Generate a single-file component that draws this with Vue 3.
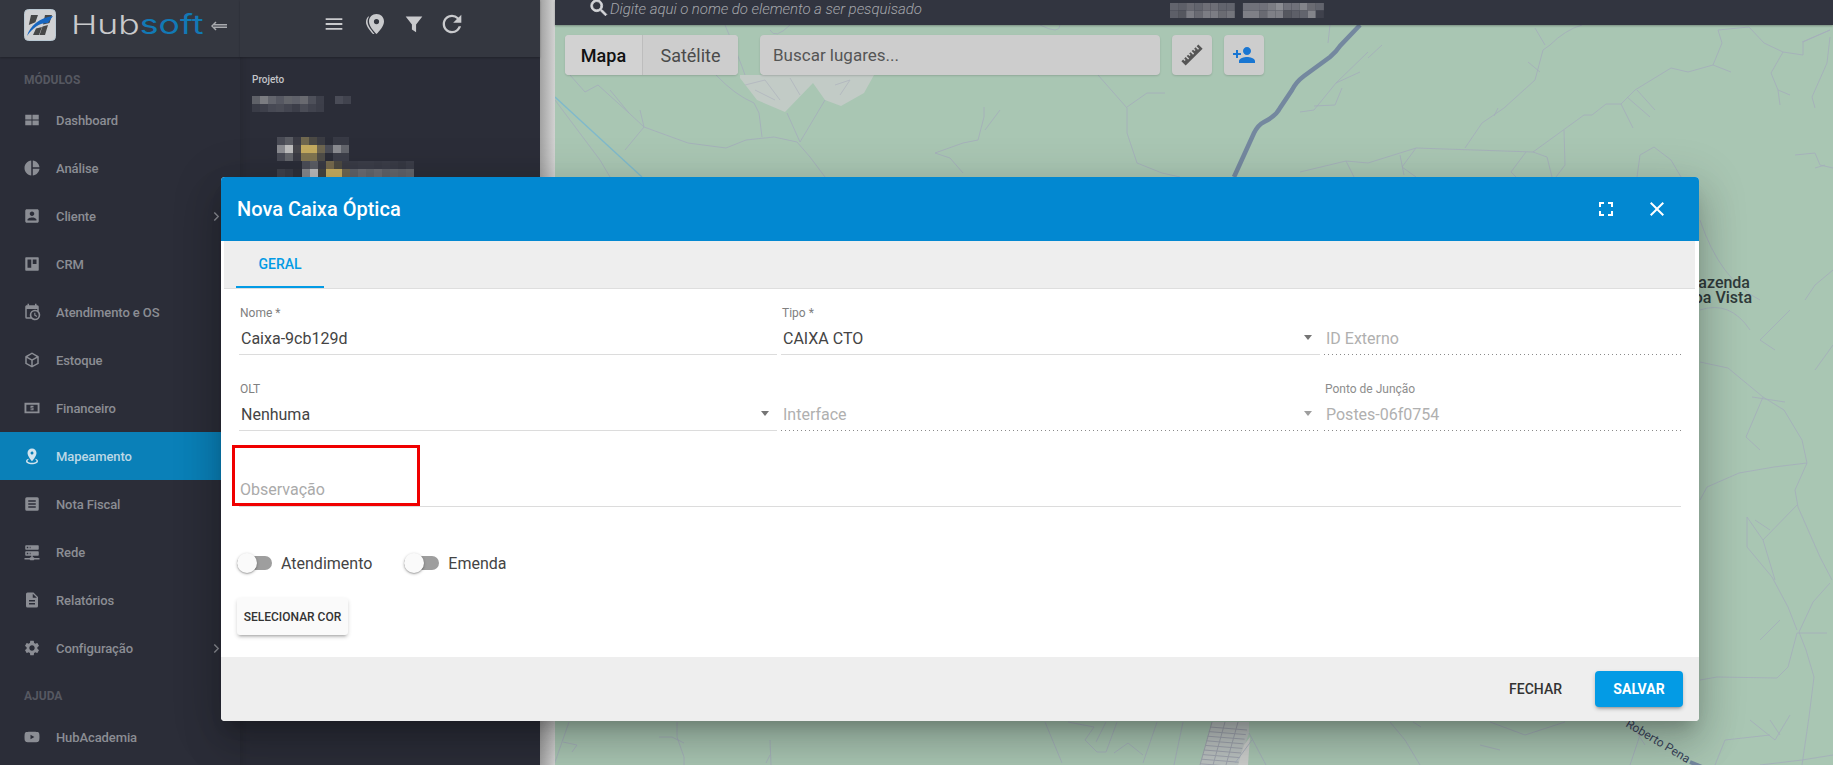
<script setup>
const nav = [
  { t: 'Dashboard', d: 'M3 5h8.4v6.4H3zm9.6 0H21v6.4h-8.4zM3 12.6h8.4V19H3zm9.6 0H21V19h-8.4z' },
  { t: 'Análise', d: 'M11 2v20c-5.07-.5-9-4.79-9-10s3.93-9.5 9-10zm2.03 0v8.99H22c-.47-4.74-4.24-8.52-8.97-8.99zm0 11.01V22c4.74-.47 8.5-4.25 8.97-8.99h-8.97z' },
  { t: 'Cliente', arrow: true, d: 'M3 5v14c0 1.1.89 2 2 2h14c1.1 0 2-.9 2-2V5c0-1.1-.9-2-2-2H5c-1.11 0-2 .9-2 2zm12 4c0 1.66-1.34 3-3 3s-3-1.34-3-3 1.34-3 3-3 3 1.34 3 3zm-9 8c0-2 4-3.1 6-3.1s6 1.1 6 3.1v1H6v-1z' },
  { t: 'CRM', d: 'M4 3h16a1 1 0 011 1v16a1 1 0 01-1 1H4a1 1 0 01-1-1V4a1 1 0 011-1zm2 3v11h5V6zm7 0v6h5V6z' },
  { t: 'Atendimento e OS', d: 'M15 13h1.5v2.82l2.44 1.41-.75 1.3L15 16.69V13m4-5H5v11h4.67c-.43-.91-.67-1.93-.67-3a7 7 0 0 1 7-7c1.07 0 2.09.24 3 .67V8M5 21a2 2 0 0 1-2-2V5c0-1.11.89-2 2-2h1V1h2v2h8V1h2v2h1a2 2 0 0 1 2 2v6.1c1.24 1.26 2 2.99 2 4.9a7 7 0 0 1-7 7c-1.91 0-3.64-.76-4.9-2H5m11-9.85A4.85 4.85 0 0 0 11.15 16c0 2.68 2.17 4.85 4.85 4.85A4.85 4.85 0 0 0 20.85 16c0-2.68-2.17-4.85-4.85-4.85z' },
  { t: 'Estoque', d: 'M21 16.5c0 .38-.21.71-.53.88l-7.9 4.44c-.16.12-.36.18-.57.18-.21 0-.41-.06-.57-.18l-7.9-4.44A.991.991 0 0 1 3 16.5v-9c0-.38.21-.71.53-.88l7.9-4.44c.16-.12.36-.18.57-.18.21 0 .41.06.57.18l7.9 4.44c.32.17.53.5.53.88v9M12 4.15 6.04 7.5 12 10.85l5.96-3.35L12 4.15M5 15.91l6 3.38v-6.71L5 9.21v6.7m14 0v-6.7l-6 3.37v6.71l6-3.38z' },
  { t: 'Financeiro', d: 'M2 5h20v14H2zM4.5 7.5v9h15v-9zM10 9h4v1.5h-2.7v.8H14V15h-4v-1.5h2.7v-.8H10z' },
  { t: 'Mapeamento', active: true, d: 'M12 2C15.31 2 18 4.66 18 7.95C18 12.41 12 19 12 19S6 12.41 6 7.95C6 4.66 8.69 2 12 2M12 6A2 2 0 0 0 10 8C10 9.11 10.9 10 12 10A2 2 0 0 0 14 8C14 6.9 13.11 6 12 6M20 19C20 21.21 16.42 23 12 23S4 21.21 4 19C4 17.71 5.22 16.56 7.11 15.83L7.75 16.74C6.67 17.19 6 17.81 6 18.5C6 19.88 8.69 21 12 21S18 19.88 18 18.5C18 17.81 17.33 17.19 16.25 16.74L16.89 15.83C18.78 16.56 20 17.71 20 19Z' },
  { t: 'Nota Fiscal', d: 'M5 3h14a2 2 0 012 2v14a2 2 0 01-2 2H5a2 2 0 01-2-2V5a2 2 0 012-2zm2 4v2h10V7zm0 4v2h10v-2zm0 4v2h10v-2z' },
  { t: 'Rede', d: 'M13 19h1a1 1 0 0 1 1 1h7v2h-7a1 1 0 0 1-1 1h-4a1 1 0 0 1-1-1H2v-2h7a1 1 0 0 1 1-1h1v-2H4a1 1 0 0 1-1-1v-4a1 1 0 0 1 1-1h16a1 1 0 0 1 1 1v4a1 1 0 0 1-1 1h-7v2M4 3h16a1 1 0 0 1 1 1v4a1 1 0 0 1-1 1H4a1 1 0 0 1-1-1V4a1 1 0 0 1 1-1m5 4h1V5H9v2m0 8h1v-2H9v2M5 5v2h2V5H5m0 8v2h2v-2H5z' },
  { t: 'Relatórios', d: 'M14 2H6a2 2 0 0 0-2 2v16a2 2 0 0 0 2 2h12a2 2 0 0 0 2-2V8l-6-6m2 16H8v-2h8v2m0-4H8v-2h8v2m-3-5V3.5L18.5 9H13z' },
  { t: 'Configuração', arrow: true, d: 'M19.14 12.94c.04-.3.06-.61.06-.94 0-.32-.02-.64-.07-.94l2.03-1.58a.49.49 0 0 0 .12-.61l-1.92-3.32a.488.488 0 0 0-.59-.22l-2.39.96c-.5-.38-1.03-.7-1.62-.94l-.36-2.54a.484.484 0 0 0-.48-.41h-3.84c-.24 0-.43.17-.47.41l-.36 2.54c-.59.24-1.13.57-1.62.94l-2.39-.96c-.22-.08-.47 0-.59.22L2.74 8.87c-.12.21-.08.47.12.61l2.03 1.58c-.05.3-.09.63-.09.94s.02.64.07.94l-2.03 1.58a.49.49 0 0 0-.12.61l1.92 3.32c.12.22.37.29.59.22l2.39-.96c.5.38 1.03.7 1.62.94l.36 2.54c.05.24.24.41.48.41h3.84c.24 0 .44-.17.47-.41l.36-2.54c.59-.24 1.13-.56 1.62-.94l2.39.96c.22.08.47 0 .59-.22l1.92-3.32c.12-.22.07-.47-.12-.61l-2.01-1.58zM12 15.6c-1.98 0-3.6-1.62-3.6-3.6s1.62-3.6 3.6-3.6 3.6 1.62 3.6 3.6-1.62 3.6-3.6 3.6z' }
]
const help = { t: 'HubAcademia', d: 'M21.58 7.19c-.23-.86-.91-1.54-1.77-1.77C18.25 5 12 5 12 5s-6.25 0-7.81.42c-.86.23-1.54.91-1.77 1.77C2 8.75 2 12 2 12s0 3.25.42 4.81c.23.86.91 1.54 1.77 1.77C5.75 19 12 19 12 19s6.25 0 7.81-.42c.86-.23 1.54-.91 1.77-1.77C22 15.25 22 12 22 12s0-3.25-.42-4.81zM10 15V9l5.2 3-5.2 3z' }

const cell = (x, y, c, w = 8, h = 8) => ({ x, y, c, w, h })
const rowOf = (x0, y, cs, w = 8, h = 8) => cs.map((c, i) => c ? cell(x0 + i * w, y, c, w, h) : null).filter(Boolean)
const projectCells = [
  ...rowOf(252, 96, ['#5f6168', '#7b7c81', '#63656d', '#565862', '#63656b', '#5f616a', '#696a70', '#4e505a', '#3d3f4a']),
  ...rowOf(335, 96, ['#4a4c57', '#41434e']),
  ...rowOf(252, 104, ['#3a3c47', '#3e404b', '#474954', '#4a4c56', '#434550', '#3c3e49', '#4a4c56', '#41434e', '#3c3e49']),
  ...rowOf(277, 137, ['#494b55', '#5a5c63', '#3a3b44', '#70684f', '#4c4a45', '#3b3c43', null, '#383a45', '#383a45']),
  ...rowOf(277, 145, ['#8a8b90', '#bdbdbd', '#45454a', '#c4ab5f', '#c4ab5f', '#6e6650', '#4b4d57', '#8a8b90', '#63656c']),
  ...rowOf(277, 153, ['#484a54', '#63656b', '#3a3b44', '#7f7450', '#7f7450', '#4f4d48', null, '#3c3e49', '#3c3e49']),
  ...rowOf(302, 161, ['#4b4d57', '#5a5c63', '#3a3b44', '#75694d', '#4d4a42', '#3a3b44', '#393b46', '#3b3d48', '#3b3d48', '#393b46', '#3b3d48', '#393b46', '#363843', '#3b3d48']),
  ...rowOf(277, 169, ['#3e404a', '#383a44', '#2f3039']),
  ...rowOf(302, 169, ['#85868b', '#b9b9b9', '#45443f', '#c4ab5f', '#c4ab5f', '#6e6650', '#5f6168', '#6a6b71', '#63656b', '#6a6b71', '#5f6168', '#63656b', '#5f6168', '#63656b'])
]
const topCells = [
  ...rowOf(0, 0, ['#62646d', '#5d5f68', '#696a72', '#62646d', '#6e6f77', '#6e6f77', '#62646d', '#62646d', null, '#70717a', '#70717a', '#70717a', '#7b7c83', '#8b8c92', '#70717a', '#70717a', '#83848a', '#6a6b72', '#62646d'], 8.1, 7.5),
  ...rowOf(0, 7.5, ['#5d5f68', '#55575f', '#7c7d84', '#696a72', '#7c7d84', '#7c7d84', '#6a6b72', '#74757c', null, '#7f8087', '#7f8087', '#696a72', '#7f8087', '#7f8087', '#55575f', '#5d5f68', '#62646d', '#83848a', '#3f414c'], 8.1, 7.5)
]

const roads = [
  'M598 85L629 113L644 127L688 143L726 148L746 140L774 137L797 142L810 157L825 177',
  'M716 75Q735 95 754 103L759 113L762 137', 'M825 100L800 142L787 113',
  'M644 127L640 110M644 127L625 150M629 113L610 90M555 100L600 160L610 177',
  'M1098 75L1127 108L1127 133L1137 163L1162 173L1180 177M1127 107L1147 93L1165 93',
  'M984 107V117L978 140L963 143L935 153L950 158L963 173M1000 110L985 130',
  'M1330 25L1328 43M725 25Q740 60 745 75M790 25Q775 40 770 30M1040 25Q1060 35 1060 25M570 75L585 92L598 85',
  'M1582 25Q1565 30 1550 45L1543 50L1535 80L1504 108L1482 123L1465 148M1545 45L1535 28M1540 72L1528 62M1498 108L1494 116',
  'M1533 152L1584 115L1592 115L1606 104L1621 104L1635 90L1671 68L1688 72L1713 65L1722 43L1718 30L1749 27L1764 43L1783 52L1803 55L1803 42L1830 30',
  'M1300 172L1346 161L1368 163L1416 148L1533 152L1547 157L1552 177M1526 152L1511 172L1516 177M1416 148L1402 167L1416 177M1346 161L1354 177M1400 155L1404 175',
  'M1654 147L1640 155L1637 177M1654 147L1671 160L1681 177M1564 130L1565 165L1556 177M1713 65L1731 72',
  'M1783 52L1771 73L1778 90L1780 105M1778 90L1790 95M1621 104L1633 128M1627 97L1650 117M1637 90L1655 110',
  'M1830 37L1827 63L1812 97L1815 108M1802 42L1830 30',
  'M1368 52L1336 83L1314 110L1300 112M1382 45L1368 58M1360 72L1336 83M1342 88L1335 105L1314 106',
  'M1795 155L1815 153L1820 165L1833 168M1815 168L1825 165M1700 362L1728 368L1763 397L1784 410L1802 440L1807 463L1795 490L1798 507L1820 557L1832 580',
  'M1700 500L1707 487L1739 473L1774 467L1807 463M1763 397L1746 437L1760 450M1752 397L1785 402',
  'M1797 505L1763 540L1747 517V547L1772 577L1788 607L1797 630M1763 540L1775 580',
  'M1830 583L1813 602L1799 632L1806 650L1814 677L1809 717L1802 765',
  'M1700 680L1717 677L1777 678L1788 667L1797 633L1827 633M1780 620L1760 640M1755 520L1770 530',
  'M1700 310Q1730 300 1750 330M1790 310L1760 340L1775 350M1833 345L1815 370M1700 220Q1720 280 1760 300M1805 300L1815 285L1833 270',
  'M1715 765L1725 740L1770 735M1760 765L1802 760L1833 755M1750 720L1775 740L1790 715M1770 720L1780 735',
  'M569 722L554 765M563 742L577 745L572 752M677 722V737L684 757V765M659 737L672 737L684 743',
  'M770 740L771 765M766 763L770 755M1045 722L1062 763M1117 722L1106 752L1097 752L1085 740L1094 727L1068 722M1106 722L1096 742M1114 753L1128 743L1143 755',
  'M1157 722L1143 763M1183 722L1174 765M1249 733L1266 765M1252 740L1235 763M1413 722L1421 727',
  'M1625 722L1640 735L1630 765M1490 722L1525 735L1565 722M1630 722L1645 745',
  'M1390 722L1405 740L1420 765M1480 745L1500 750'
]
const blockLines = Array.from({ length: 9 }, (_, i) => {
  const y = 727 + i * 4.6
  return `M${1210 - i * 1.2} ${y}L${1247 - i * 1.2} ${y + 3}`
})
</script>

<template>
  <div class="app">
    <aside class="sidebar">
      <header class="brand">
        <svg class="logo" viewBox="0 0 32 32" aria-hidden="true">
          <rect x=".5" y=".5" width="31" height="31" rx="4" fill="#d0d1d3" stroke="#b9c8d3" />
          <path d="M7 6h7l-2.6 7.2L4.8 16zM21 6h7l-2.5 8-6.5 1.5zM12 19.5l6-1.5-3 8H9zM24 16l-3 10h-5.5l3-8.500z" fill="#474747" />
          <path d="M3 27C6 17 15 9 29 7c-2 3-4 5-5 7-7-.5-15 4-21 13z" fill="#1766c0" />
        </svg>
        <span class="wordmark"><span class="hub">Hub</span><span class="soft">soft</span></span>
        <svg class="collapse" viewBox="0 0 16 10" aria-hidden="true">
          <path d="M5 1L1 5l4 4M3 3.7h13M3 6.3h13" fill="none" stroke="#a9abaf" stroke-width="1.5" />
        </svg>
      </header>
      <div class="section first">MÓDULOS</div>
      <a v-for="item in nav" :key="item.t" class="nav-item" :class="{ active: item.active }">
        <svg class="nav-icon" viewBox="0 0 24 24" aria-hidden="true"><path :d="item.d" fill-rule="evenodd" /></svg>
        <span>{{ item.t }}</span>
        <svg v-if="item.arrow" class="chevron" viewBox="0 0 8 12" aria-hidden="true"><path d="M1.5 1.5L6 6l-4.5 4.5" fill="none" stroke="currentColor" stroke-width="1.6" /></svg>
      </a>
      <div class="section">AJUDA</div>
      <a class="nav-item">
        <svg class="nav-icon" viewBox="0 0 24 24" aria-hidden="true"><path :d="help.d" fill-rule="evenodd" /></svg>
        <span>{{ help.t }}</span>
      </a>
    </aside>

    <section class="panel">
      <header class="panel-tools">
        <svg class="tool menu" viewBox="0 0 24 24" aria-hidden="true"><path d="M2 5h20v2.3H2zM2 10.9h20v2.3H2zM2 16.7h20V19H2z" /></svg>
        <svg class="tool pin" viewBox="0 0 24 24" aria-hidden="true"><path fill-rule="evenodd" d="M13.5 2c4.3 0 7.5 3.2 7.5 7.4 0 4.7-4.7 9.7-7.5 12.6-2.8-2.9-7.5-7.9-7.5-12.6C6 5.2 9.2 2 13.5 2zm0 5a2.6 2.6 0 100 5.2 2.6 2.6 0 000-5.2z" /><path d="M5.2 4.5C3.8 6 3 7.8 3 9.9c0 3.7 3 7.700 7 12.100h1.5C7.7 17.3 4.6 13.4 4.6 9.5c0-1.8.5-3.5 1.5-4.7z" /></svg>
        <svg class="tool funnel" viewBox="0 0 24 24" aria-hidden="true"><path d="M2 3h20l-7.5 9.5V22l-5-3.5v-6z" /></svg>
        <svg class="tool reload" viewBox="0 0 24 24" aria-hidden="true"><path d="M17.65 6.35A7.958 7.958 0 0 0 12 4c-4.42 0-7.99 3.58-7.99 8s3.57 8 7.99 8c3.73 0 6.84-2.55 7.73-6h-2.08A5.99 5.99 0 0 1 12 18c-3.31 0-6-2.69-6-6s2.69-6 6-6c1.66 0 3.14.69 4.22 1.78L13 11h7V4l-2.35 2.35z" /></svg>
      </header>
      <div class="panel-body">
        <div class="project-label">Projeto</div>
        <svg class="mosaic" viewBox="252 96 170 81" aria-hidden="true">
          <rect v-for="(c, i) in projectCells" :key="i" :x="c.x" :y="c.y" :width="c.w" :height="c.h" :fill="c.c" />
        </svg>
      </div>
    </section>

    <div class="stripe"></div>

    <main class="map-area">
      <svg class="map" viewBox="555 0 1278 765" preserveAspectRatio="none" aria-hidden="true">
        <polygon points="740,78 757,100 785,112 813,83 825,100 841,106 864,93 874,75 740,75" fill="#c2cbc6" />
        <path d="M745 85L765 80L780 100M790 78L800 95M835 85L850 80L840 95M755 90L775 100" fill="none" stroke="#b4bac0" />
        <polygon points="1212,722 1249,722 1249,733 1238,765 1200,765" fill="#bcc3c2" />
        <polygon points="1244,745 1250,737 1248,765 1238,765" fill="#cdcfcd" />
        <path v-for="(d, i) in blockLines" :key="'b' + i" :d="d" fill="none" stroke="#9fa4ae" stroke-width="1" />
        <path d="M1212 722L1200 765M1225 722L1213 765M1238 722L1226 765" fill="none" stroke="#9fa4ae" />
        <path v-for="(d, i) in roads" :key="i" :d="d" fill="none" stroke="#a5aebb" stroke-width="1" stroke-opacity=".85" />
        <path d="M555 97L642 177" fill="none" stroke="#7fb9cc" stroke-width="1.3" />
        <path d="M1234 177L1254 133Q1258 125 1264 122Q1276 116 1280 108L1292 90Q1296 82 1304 76L1330 57Q1336 52 1340 46L1360 25" fill="none" stroke="#74889f" stroke-width="4.5" />
        <path d="M1690 762L1702 767" fill="none" stroke="#74889f" stroke-width="4" />
        <text class="map-label" x="1750" y="288" text-anchor="end">Fazenda</text>
        <text class="map-label" x="1752" y="303" text-anchor="end">Boa Vista</text>
        <text class="road-label" transform="translate(1625 726) rotate(31)">Roberto Pena</text>
      </svg>

      <div class="topbar">
        <svg class="search-icon" viewBox="0 0 24 24" aria-hidden="true"><path d="M15.5 14h-.79l-.28-.27A6.471 6.471 0 0 0 16 9.5 6.5 6.5 0 1 0 9.5 16c1.61 0 3.09-.59 4.23-1.57l.27.28v.79l5 4.99L20.49 19l-4.99-5zm-6 0C7.01 14 5 11.99 5 9.5S7.01 5 9.5 5 14 7.01 14 9.5 11.99 14 9.5 14z" /></svg>
        <span class="search-hint">Digite aqui o nome do elemento a ser pesquisado</span>
        <svg class="top-mosaic" viewBox="0 0 155 15" aria-hidden="true">
          <rect v-for="(c, i) in topCells" :key="i" :x="c.x" :y="c.y" :width="c.w" :height="c.h" :fill="c.c" />
        </svg>
      </div>

      <div class="controls">
        <div class="map-type">
          <button class="type on">Mapa</button>
          <button class="type">Satélite</button>
        </div>
        <div class="places">Buscar lugares...</div>
        <button class="square">
          <svg viewBox="0 0 24 24" aria-hidden="true"><path fill="#555" d="M1.39 18.36l1.77-1.76L4.58 18l1.06-1.06-1.42-1.41 1.42-1.42 2.47 2.48 1.06-1.06-2.47-2.48 1.41-1.41 1.42 1.41L10.59 12l-1.42-1.41 1.42-1.42 2.47 2.48 1.06-1.06-2.47-2.48 1.41-1.41 1.41 1.41 1.07-1.06-1.42-1.41 1.42-1.42L18 6.7l1.07-1.06-2.47-2.48 1.76-1.77 4.25 4.25L5.64 22.61z" /></svg>
        </button>
        <button class="square">
          <svg viewBox="0 0 24 24" aria-hidden="true"><path fill="#1976d2" d="M15 12c2.21 0 4-1.79 4-4s-1.79-4-4-4-4 1.79-4 4 1.79 4 4 4zm-9-2V7H4v3H1v2h3v3h2v-3h3v-2H6zm9 4c-2.67 0-8 1.34-8 4v2h16v-2c0-2.66-5.33-4-8-4z" /></svg>
        </button>
      </div>
    </main>

    <div class="modal" role="dialog">
      <header class="modal-head">
        <h1>Nova Caixa Óptica</h1>
        <svg class="head-icon" viewBox="0 0 24 24" aria-hidden="true"><path d="M7 14H5v5h5v-2H7v-3zm-2-4h2V7h3V5H5v5zm12 7h-3v2h5v-5h-2v3zM14 5v2h3v3h2V5h-5z" /></svg>
        <svg class="head-icon close" viewBox="0 0 24 24" aria-hidden="true"><path d="M19 6.41 17.59 5 12 10.59 6.41 5 5 6.41 10.59 12 5 17.59 6.41 19 12 13.41 17.59 19 19 17.59 13.41 12z" /></svg>
      </header>

      <nav class="tabs"><span class="tab">GERAL</span></nav>

      <div class="modal-body">
        <div class="grid">
          <div class="field">
            <label>Nome *</label>
            <div class="value">Caixa-9cb129d</div>
          </div>
          <div class="field">
            <label>Tipo *</label>
            <div class="value">CAIXA CTO<i class="caret"></i></div>
          </div>
          <div class="field off">
            <label></label>
            <div class="value">ID Externo</div>
          </div>
          <div class="field">
            <label>OLT</label>
            <div class="value">Nenhuma<i class="caret"></i></div>
          </div>
          <div class="field off">
            <label></label>
            <div class="value">Interface<i class="caret"></i></div>
          </div>
          <div class="field off">
            <label class="keep">Ponto de Junção</label>
            <div class="value">Postes-06f0754</div>
          </div>
        </div>

        <div class="obs">
          <span>Observação</span>
          <div class="red-mark"></div>
        </div>

        <div class="toggles">
          <div class="toggle"><span class="track"><span class="thumb"></span></span>Atendimento</div>
          <div class="toggle"><span class="track"><span class="thumb"></span></span>Emenda</div>
        </div>

        <button class="color-btn">SELECIONAR COR</button>
      </div>

      <footer class="modal-foot">
        <button class="text-btn">FECHAR</button>
        <button class="save-btn">SALVAR</button>
      </footer>
    </div>
  </div>
</template>

<style>
html, body { margin: 0; background: #2b2d38; overflow: hidden; }
</style>

<style scoped>
* { box-sizing: border-box; }
.app {
  position: relative; display: flex; width: 1833px; height: 765px; overflow: hidden;
  font-family: Roboto, "Liberation Sans", sans-serif; color: #333;
}
svg { display: block; flex: none; }
button { font-family: inherit; border: 0; padding: 0; }

.sidebar { width: 240px; flex: none; background: #2b2d38; color: #8b8d94; }
.brand { height: 57px; display: flex; align-items: center; background: #343740; padding: 0 0 0 24px; box-shadow: 0 1px 2px rgba(0,0,0,.25); position: relative; }
.logo { width: 32px; height: 32px; margin-top: -7px; }
.wordmark { width: 140px; margin-left: 15px; margin-top: -7px; font-family: Inter, sans-serif; font-weight: 300; font-size: 26px; line-height: 30px; transform: scaleX(1.37); transform-origin: left center; white-space: nowrap; }
.hub { color: #c9cacc; }
.soft { color: #1279b5; font-weight: 400; }
.collapse { width: 16px; height: 10px; margin-top: -6px; }
.section { padding: 16px 0 9px 24px; font-size: 12px; line-height: 16px; font-weight: 700; color: #565861; }
.section.first { padding-top: 15px; padding-bottom: 8px; }
.nav-item { position: relative; display: flex; align-items: center; height: 48px; padding-left: 23px; font-size: 13px; font-weight: 500; letter-spacing: -.1px; }
.nav-item.active { background: #0a80b8; color: #bcd8e6; }
.nav-icon { width: 18px; height: 18px; fill: #8b8d94; margin-right: 15px; }
.active .nav-icon { fill: #d3e4ee; }
.chevron { position: absolute; left: 213px; top: 19px; width: 7px; height: 11px; }

.panel { width: 300px; flex: none; background: #2b2d38; box-shadow: inset 12px 0 10px -10px rgba(0,0,0,.12); }
.panel-tools { height: 57px; background: #343740; display: flex; align-items: center; padding: 0 0 10px 84px; box-shadow: 0 1px 2px rgba(0,0,0,.25); position: relative; }
.tool { fill: #c9cacd; }
.menu { width: 20px; height: 20px; margin-right: 19px; }
.pin { width: 24px; height: 24px; margin-right: 17px; }
.funnel { width: 20px; height: 20px; margin-right: 13.5px; }
.reload { width: 28px; height: 28px; }
.panel-body { padding: 15px 0 0 12px; }
.project-label { font-size: 10px; line-height: 15px; font-weight: 500; color: #c4c5c9; }
.mosaic { margin-top: 9px; width: 170px; height: 81px; }

.stripe { width: 15px; flex: none; background: linear-gradient(90deg, #a2a2a2, #d2d2d2); }

.map-area { position: relative; flex: 1; background: #a9c6b3; }
.map { position: absolute; inset: 0; width: 100%; height: 100%; }
.map-label { font-size: 16px; font-weight: 500; fill: #2f3a3a; }
.road-label { font-size: 12px; fill: #39435a; }
.topbar { position: relative; display: flex; align-items: center; height: 25px; background: #323540; padding-left: 33px; box-shadow: 0 1px 2px rgba(0,0,0,.3); }
.search-icon { width: 22px; height: 22px; fill: #d5d6d9; stroke: #d5d6d9; stroke-width: .9; margin-top: -9px; }
.search-hint { width: 310px; font-size: 15px; letter-spacing: -.05px; font-style: italic; font-weight: 300; color: #a4a6ab; white-space: nowrap; margin-top: -7px; }
.top-mosaic { width: 155px; height: 15px; margin-left: 250px; margin-top: -4px; }
.controls { position: relative; display: flex; height: 40px; margin: 10px 0 0 10px; }
.map-type { display: flex; width: 173px; border-radius: 4px; overflow: hidden; background: #cdcdcd; box-shadow: 0 1px 2px rgba(0,0,0,.15); }
.type { width: 95px; background: #cdcdcd; font-size: 18px; color: #4a4a4a; font-weight: 400; }
.type.on { width: 78px; background: #d2d2d2; color: #111; font-weight: 500; border-right: 1px solid #bdbdbd; }
.places { width: 400px; margin-left: 22px; padding-left: 13px; line-height: 40px; border-radius: 4px; background: #cdcdcd; box-shadow: 0 1px 2px rgba(0,0,0,.15); font-size: 17px; color: #555; }
.square { width: 40px; margin-left: 12px; display: flex; align-items: center; justify-content: center; border-radius: 4px; background: #cdcdcd; box-shadow: 0 1px 2px rgba(0,0,0,.15); }
.square svg { width: 24px; height: 24px; }

.modal {
  position: absolute; left: 221px; top: 177px; width: 1478px; height: 544px;
  display: flex; flex-direction: column; background: #fff; border-radius: 4px;
  box-shadow: 0 11px 15px -7px rgba(0,0,0,.2), 0 24px 38px 3px rgba(0,0,0,.14), 0 9px 46px 8px rgba(0,0,0,.12);
}
.modal-head { height: 64px; flex: none; display: flex; align-items: center; padding: 0 32px 0 16px; background: #0288d1; color: #fff; border-radius: 4px 4px 0 0; }
.modal-head h1 { flex: 1; margin: 0; font-size: 20px; font-weight: 500; line-height: 24px; }
.head-icon { width: 24px; height: 24px; fill: #fff; margin-right: 27px; }
.head-icon.close { margin-right: -2px; }
.tabs { height: 48px; flex: none; margin: 0 4px 0 3px; background: #eeeeee; border-bottom: 1px solid #dedede; padding-left: 12px; }
.tab { display: flex; justify-content: center; align-items: center; width: 88px; height: 47px; border-bottom: 2px solid #039be5; font-size: 14px; font-weight: 500; color: #039be5; }
.modal-body { flex: 1; padding: 17px 18px 0; }
.grid { display: grid; grid-template-columns: 538px 539px 357px; column-gap: 4px; row-gap: 27px; }
.field label { display: block; height: 14px; padding-left: 1px; font-size: 12px; line-height: 14px; color: #808080; font-weight: 400; }
.value { position: relative; height: 35px; padding: 6px 0 0 2px; font-size: 16px; line-height: 26px; color: #444; border-bottom: 1px solid #dcdcdc; }
.off .value { color: #b0b0b0; border-bottom: 0; background: linear-gradient(90deg, #8a8a8a 0, #8a8a8a 33%, transparent 0) left bottom / 4px 1px repeat-x; }
.off label { color: #8d8d8d; }
.caret { position: absolute; right: 8px; top: 15px; border: 4.5px solid transparent; border-top: 5px solid #757575; border-bottom: 0; }
.off .caret { border-top-color: #9e9e9e; }
.obs { position: relative; height: 76px; display: flex; align-items: flex-end; padding: 0 0 6px 1px; font-size: 16px; line-height: 20px; color: #aaaaaa; border-bottom: 1px solid #dcdcdc; }
.red-mark { position: absolute; left: -7px; top: 14px; width: 188px; height: 61px; border: 3px solid #f00000; }
.toggles { display: flex; gap: 32px; margin: 46px 0 0 -2px; }
.toggle { display: flex; align-items: center; height: 20px; font-size: 16px; color: #444; font-weight: 400; }
.track { position: relative; width: 35px; height: 14px; margin-right: 9px; background: #9e9e9e; border-radius: 7px; }
.thumb { position: absolute; left: 0; top: -3px; width: 20px; height: 20px; border-radius: 50%; background: #fafafa; box-shadow: 0 1px 3px rgba(0,0,0,.3), 0 1px 1px rgba(0,0,0,.14); }
.color-btn { display: block; width: 111px; height: 37px; margin: 25px 0 0 -2px; background: #fafafa; border-radius: 3px; font-size: 12px; font-weight: 500; color: #333; box-shadow: 0 3px 3px -2px rgba(0,0,0,.25), 0 2px 4px rgba(0,0,0,.16); white-space: nowrap; }
.modal-foot { height: 64px; flex: none; display: flex; align-items: center; justify-content: flex-end; padding-right: 16px; background: #eeeeee; border-radius: 0 0 4px 4px; }
.text-btn { background: transparent; font-size: 14px; font-weight: 500; color: #333; margin-right: 33px; }
.save-btn { width: 88px; height: 36px; background: #039be5; color: #fff; border-radius: 4px; font-size: 14px; font-weight: 700; box-shadow: 0 3px 3px -2px rgba(0,0,0,.25), 0 2px 4px rgba(0,0,0,.2); }
</style>
